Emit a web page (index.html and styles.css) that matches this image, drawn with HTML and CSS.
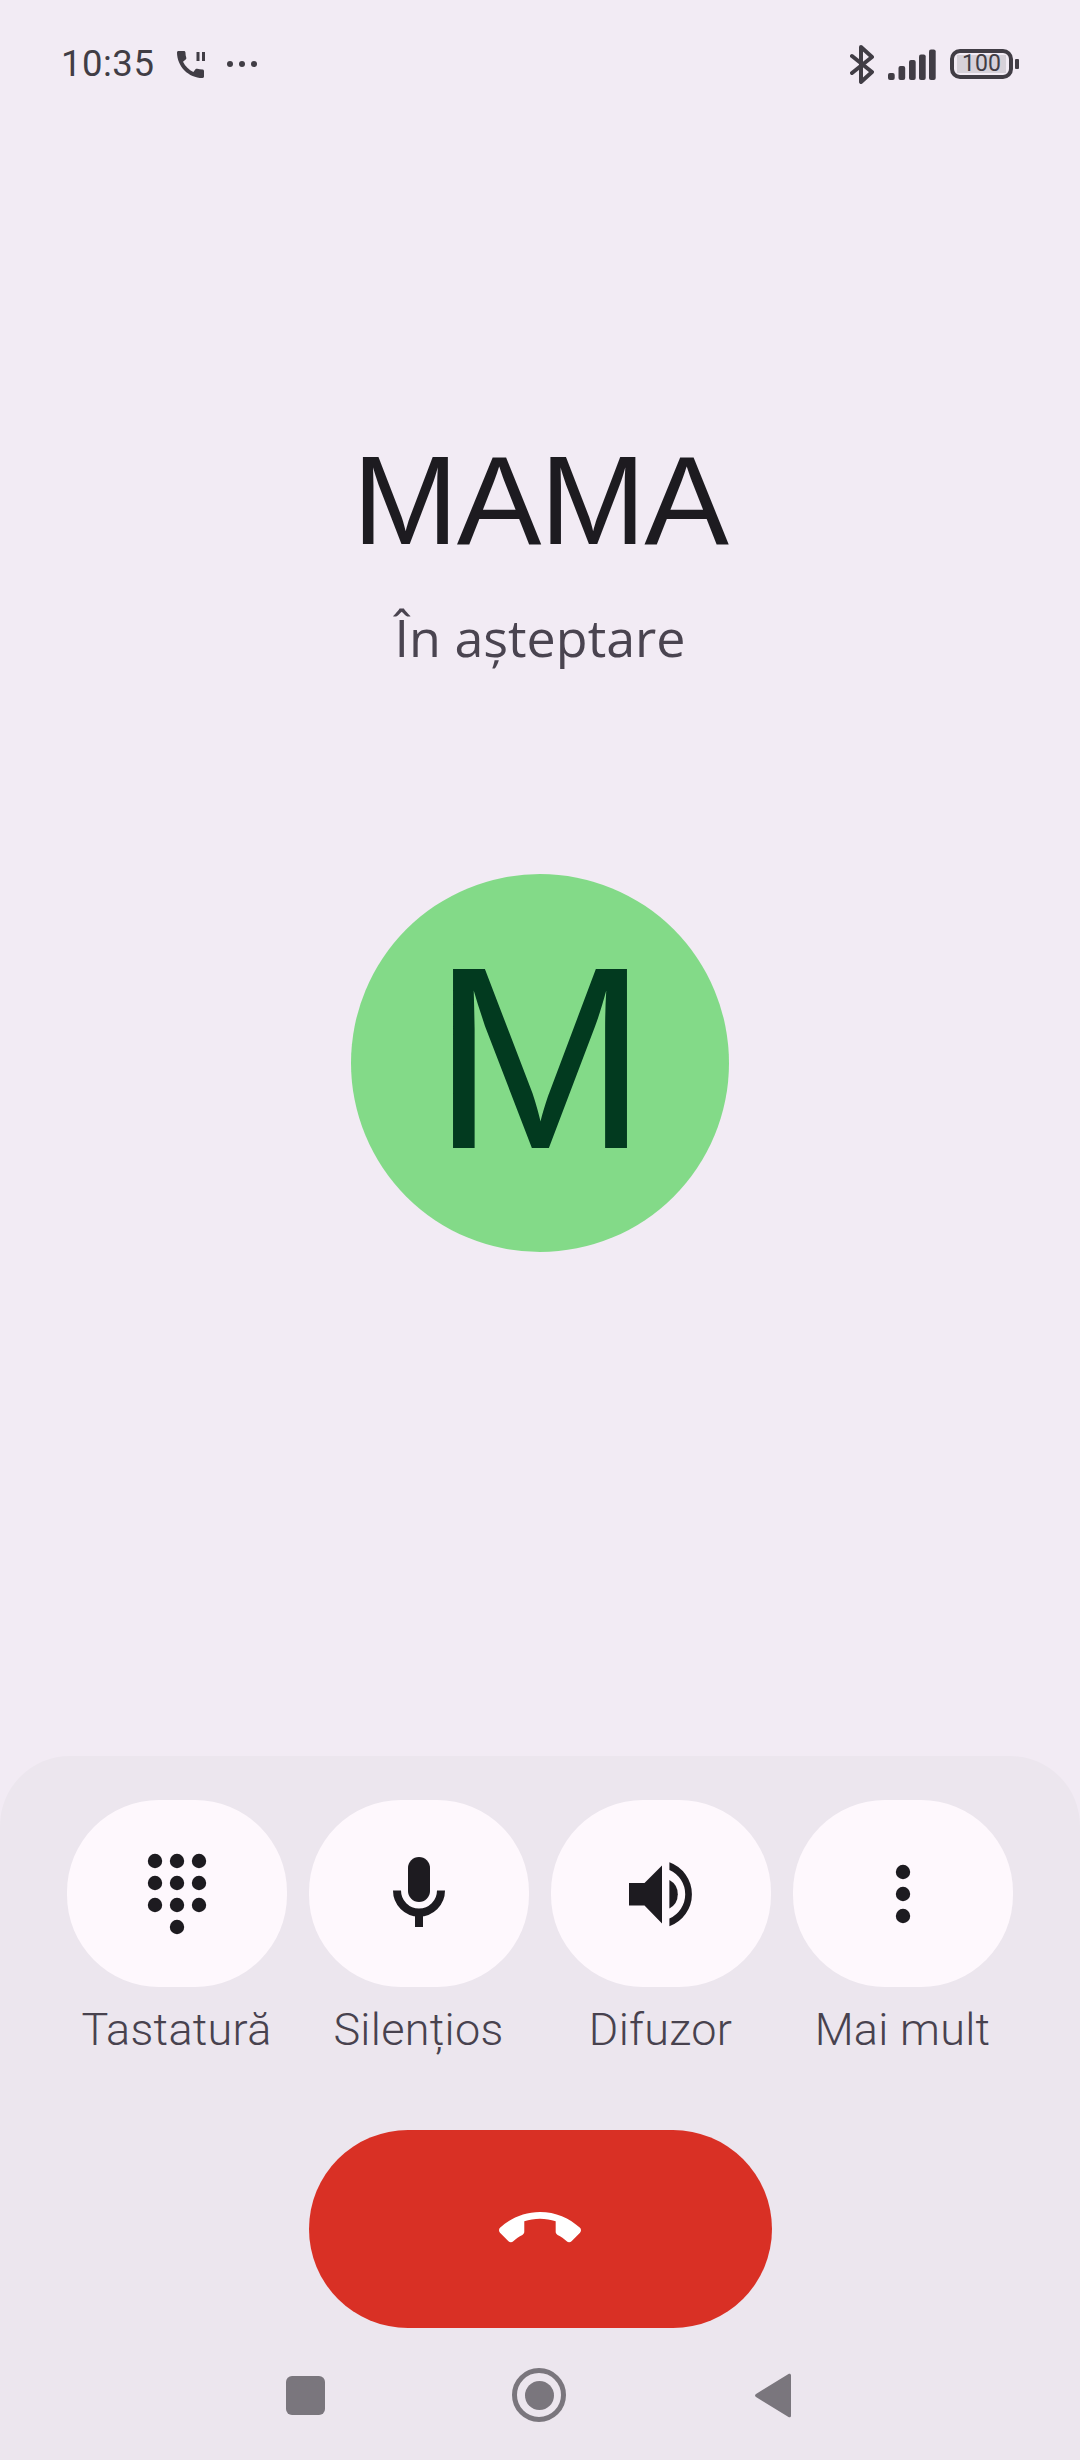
FILE: index.html
```html
<!DOCTYPE HTML>
<html lang="ro">
<head>
<meta charset="utf-8">
<title>MAMA</title>
<link rel="stylesheet" href="styles.css">
</head>
<body>
<!-- Status bar -->
<div class="status">
  <div class="status-left">
    <span class="time">10:35</span>
    <svg class="ic-held" viewBox="0 0 28 27">
      <path transform="translate(-4.500 -4.500) scale(1.500)" d="M20.010 15.380c-1.230 0-2.420-.2-3.530-.56-.35-.12-.74-.03-1.010.24l-1.570 1.970c-2.830-1.350-5.480-3.900-6.890-6.830l1.950-1.660c.27-.28.35-.67.24-1.020-.37-1.110-.56-2.300-.56-3.530 0-.54-.45-.99-.99-.99H4.190C3.650 3 3 3.240 3 3.990 3 13.280 10.730 21 20.010 21c.71 0 .99-.63.99-1.180v-3.450c0-.54-.45-.99-.99-.99z"/>
      <rect x="19.500" y="1" width="3" height="9"/>
      <rect x="25" y="1" width="3" height="9"/>
    </svg>
    <div class="dots"><i></i><i></i><i></i></div>
  </div>
  <div class="status-right">
    <svg class="ic-bt" viewBox="0 0 24 39">
      <path d="M2 11 L22 27 L11 37 V2 L22 12 L2 28"/>
    </svg>
    <svg class="ic-signal" viewBox="0 0 48 31">
      <rect x="0" y="24" width="6.700" height="7" rx="2"/>
      <rect x="10.500" y="17" width="6.700" height="14" rx="2"/>
      <rect x="21" y="11" width="6.700" height="20" rx="2"/>
      <rect x="31" y="5.500" width="6.700" height="25.500" rx="2"/>
      <rect x="41" y="0.500" width="6.700" height="30.500" rx="2"/>
    </svg>
    <div class="battery">
      <div class="battery-body"><span class="battery-level">100</span></div>
      <div class="battery-nub"></div>
    </div>
  </div>
</div>

<!-- Caller -->
<h1 class="name">MAMA</h1>
<div class="state">În așteptare</div>
<div class="avatar">M</div>

<!-- Bottom sheet with the call controls -->
<div class="sheet">
  <div class="actions">
    <div class="action">
      <div class="pill">
        <svg viewBox="0 0 80 80">
          <circle cx="18" cy="7" r="7.200"/><circle cx="40" cy="7" r="7.200"/><circle cx="62" cy="7" r="7.200"/>
          <circle cx="18" cy="29" r="7.200"/><circle cx="40" cy="29" r="7.200"/><circle cx="62" cy="29" r="7.200"/>
          <circle cx="18" cy="51" r="7.200"/><circle cx="40" cy="51" r="7.200"/><circle cx="62" cy="51" r="7.200"/>
          <circle cx="40" cy="73" r="7.200"/>
        </svg>
      </div>
      <span class="label">Tastatură</span>
    </div>
    <div class="action">
      <div class="pill">
        <svg viewBox="0 0 80 80">
          <rect x="29" y="3" width="22" height="45" rx="11"/>
          <path class="stroke" d="M18 36.500a22 22 0 0 0 44 0"/>
          <rect x="36" y="60" width="8" height="13"/>
        </svg>
      </div>
      <span class="label">Silențios</span>
    </div>
    <div class="action">
      <div class="pill">
        <svg viewBox="0 0 80 80">
          <path d="M8 29h15.500L41 11.500V69.500L23.500 51.500H8z"/>
          <path d="M48.400 26A16.300 16.300 0 0 1 48.400 54.500z"/>
          <path d="M48.400 8.200A34 34 0 0 1 48.400 72.200V64.500A26.500 26.500 0 0 0 48.400 16z"/>
        </svg>
      </div>
      <span class="label">Difuzor</span>
    </div>
    <div class="action">
      <div class="pill">
        <svg viewBox="0 0 80 80">
          <circle cx="40" cy="18" r="7.200"/><circle cx="40" cy="40" r="7.200"/><circle cx="40" cy="62" r="7.200"/>
        </svg>
      </div>
      <span class="label">Mai mult</span>
    </div>
  </div>

  <div class="hangup">
    <svg viewBox="0 0 24 24">
      <path d="M12 9c-1.600 0-3.150.25-4.600.72v3.100c0 .39-.23.74-.56.9-.98.49-1.870 1.120-2.660 1.850-.18.18-.43.28-.7.28-.28 0-.53-.11-.71-.29L.29 13.080c-.18-.17-.29-.42-.29-.7 0-.28.11-.53.29-.71C3.340 8.780 7.460 7 12 7s8.660 1.780 11.710 4.670c.18.18.29.43.29.71 0 .28-.11.53-.29.71l-2.480 2.480c-.18.18-.43.29-.71.29-.27 0-.52-.11-.7-.28-.79-.74-1.690-1.360-2.670-1.850-.33-.16-.56-.5-.56-.9v-3.100C15.150 9.250 13.600 9 12 9z"/>
    </svg>
  </div>

  <!-- Navigation keys -->
  <div class="nav">
    <div class="nav-recent"></div>
    <div class="nav-home"><div class="nav-home-dot"></div></div>
    <svg class="nav-back" viewBox="0 0 36 45">
      <path d="M33.500 1c1.200-.7 2.500 0 2.500 1.300V42.700c0 1.300-1.300 2-2.500 1.300L1 24c-1.300-.8-1.300-2.200 0-3z"/>
    </svg>
  </div>
</div>
</body>
</html>
```

FILE: styles.css
```css
/* Whole screen, the sheet sits at the bottom */
body {
  width: 1080px;
  height: 2460px;
  margin: 0;
  padding: 0;
  display: flex;
  flex-direction: column;
  overflow: hidden;
  background: #f2ebf4;
  font-family: "Roboto", sans-serif;
}

/* Status bar */
.status {
  height: 128px;
  padding: 0 61px 0 61px;
  display: flex;
  align-items: center;
  justify-content: space-between;
  color: #413d45;
}
.status svg {
  display: block;
  fill: #413d45;
}
.status-left {
  display: flex;
  align-items: center;
}
.status-right {
  display: flex;
  align-items: center;
}
.time {
  font-size: 36.500px;
  line-height: 44px;
  letter-spacing: 0.500px;
  width: 116px;
}
.ic-held {
  width: 28px;
  height: 27px;
}
.dots {
  display: flex;
  gap: 6px;
  margin-left: 22px;
}
.dots i {
  width: 6px;
  height: 6px;
  border-radius: 50%;
  background: #413d45;
}
.status .ic-bt {
  width: 24px;
  height: 39px;
  fill: none;
  stroke: #413d45;
  stroke-width: 4;
  stroke-linecap: round;
  stroke-linejoin: round;
}
.ic-signal {
  width: 48px;
  height: 31px;
  margin-left: 14px;
  margin-top: 1px;
}
.battery {
  display: flex;
  align-items: center;
  margin-left: 14px;
}
.battery-body {
  width: 63px;
  height: 30px;
  box-sizing: border-box;
  border: 4px solid #413d45;
  border-radius: 10px;
  padding: 2px 3px;
  display: flex;
}
.battery-level {
  flex: 1;
  background: #d6d1d9;
  font-size: 23px;
  line-height: 18px;
  text-align: center;
  color: #413d45;
}
.battery-nub {
  width: 4px;
  height: 10px;
  margin-left: 2px;
  border-radius: 1px;
  background: #413d45;
}

/* Caller name and call state */
.name {
  margin: 301px 0 0 0;
  font-family: "Liberation Sans", sans-serif;
  font-size: 127px;
  font-weight: normal;
  line-height: 142px;
  letter-spacing: -1.500px;
  text-align: center;
  color: #1d1b20;
}
.state {
  margin-top: 30px;
  font-family: "Open Sans", sans-serif;
  font-size: 52px;
  line-height: 72px;
  text-align: center;
  color: #4a4450;
}

/* Contact letter in a circle */
.avatar {
  width: 378px;
  height: 378px;
  box-sizing: border-box;
  padding-bottom: 10px;
  margin: 201px auto 0 auto;
  border-radius: 50%;
  background: #83da88;
  display: flex;
  align-items: center;
  justify-content: center;
  font-family: "Liberation Sans", sans-serif;
  font-size: 260px;
  line-height: 1;
  color: #023a1f;
}

/* Bottom sheet */
.sheet {
  margin-top: auto;
  height: 704px;
  box-sizing: border-box;
  padding-top: 44px;
  border-radius: 70px 70px 0 0;
  background: #ece6ee;
}
.actions {
  display: flex;
  justify-content: center;
  gap: 22px;
  padding-right: 1px;
}
.action {
  width: 220px;
  display: flex;
  flex-direction: column;
  align-items: center;
}
.pill {
  width: 220px;
  height: 187px;
  border-radius: 92px;
  background: #fef8fd;
  display: flex;
  align-items: center;
  justify-content: center;
}
.pill svg {
  width: 80px;
  height: 80px;
  overflow: visible;
  fill: #1d1b20;
}
.pill svg .stroke {
  fill: none;
  stroke: #1d1b20;
  stroke-width: 8;
}
.label {
  margin-top: 16px;
  font-size: 45px;
  font-weight: 300;
  line-height: 54px;
  letter-spacing: 0.300px;
  white-space: nowrap;
  color: #48424e;
}

/* End call button */
.hangup {
  width: 463px;
  height: 198px;
  margin: 73px auto 0 auto;
  border-radius: 99px;
  background: #d93025;
  display: flex;
  align-items: center;
  justify-content: center;
}
.hangup svg {
  width: 82px;
  height: 82px;
  fill: #ffffff;
}

/* Navigation keys */
.nav {
  margin-top: 40px;
  height: 54px;
  padding-left: 286px;
  display: flex;
  align-items: center;
  gap: 187px;
}
.nav-recent {
  width: 39px;
  height: 39px;
  border-radius: 6px;
  background: #7a767d;
}
.nav-home {
  width: 54px;
  height: 54px;
  box-sizing: border-box;
  border: 5px solid #7a767d;
  border-radius: 50%;
  display: flex;
  align-items: center;
  justify-content: center;
}
.nav-home-dot {
  width: 29px;
  height: 29px;
  border-radius: 50%;
  background: #7a767d;
}
.nav-back {
  width: 36px;
  height: 45px;
  margin-left: 2px;
  fill: #7a767d;
}
```
